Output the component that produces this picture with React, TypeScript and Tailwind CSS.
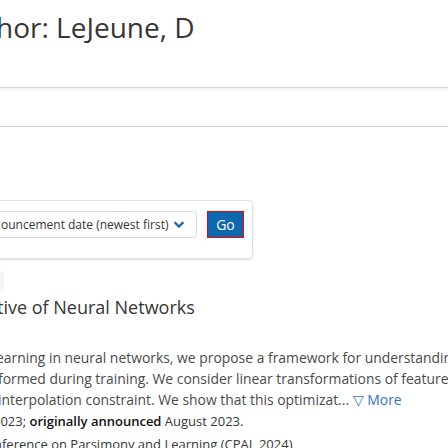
import React from "react";

const Chevron = () => (
  <svg width="10" height="8" viewBox="0 0 10 8" className="shrink-0">
    <path d="M1.5 2 L5 5.5 L8.5 2" fill="none" stroke="#2a6aa6" strokeWidth="2.4" strokeLinecap="square" />
  </svg>
);

export default function App() {
  return (
    <div className="w-[448px] h-[448px] overflow-hidden bg-white font-['Open_Sans',sans-serif] text-[#363636]">
      <h1 className="mt-[7px] -ml-[4px] whitespace-nowrap text-[28px] leading-[40px] font-normal text-[#363636]">
        hor: LeJeune, D
      </h1>

      <div className="mt-[40px] h-[4px] border-t border-[#d6d6d6] bg-gradient-to-b from-[#f0f0f0] to-white" />
      <div className="mt-[35px] border-t border-[#cfcfcf]" />

      <div className="mt-[73px] -ml-[20px] w-[273px] h-[59px] rounded-[4px] border border-[#e3e3e3] shadow-[0_1px_2px_rgba(0,0,0,0.12)] flex items-start gap-[10px] pt-[10px]">
        <div className="w-[216px] h-[27px] rounded-[4px] border border-[#dbdbdb] flex items-center pl-[19px] pr-[12px]">
          <span className="whitespace-nowrap text-[12px] text-[#363636]">ouncement date (newest first)</span>
          <span className="ml-auto flex"><Chevron /></span>
        </div>
        <button className="w-[37px] h-[27px] bg-[#0e68b0] border border-[#ff0000] text-white text-[14px] flex items-center justify-center">
          Go
        </button>
      </div>

      <div className="mt-[12px] -ml-[20px] w-[24px] h-[20px] rounded-[4px] bg-[#f5f5f5]" />

      <div className="mt-[2px] -ml-[3px] whitespace-nowrap text-[18px] leading-[28px] text-[#363636]">
        tive of Neural Networks
      </div>

      <div className="mt-[26px] text-[13.9px] leading-[21px] text-[#4a4a4a] whitespace-nowrap">
        <div className="-ml-[4px]">earning in neural networks, we propose a framework for understanding</div>
        <div className="-ml-[2px]">formed during training. We consider linear transformations of features</div>
        <div className="-ml-[2px]">
          interpolation constraint. We show that this optimizat...{" "}
          <span className="text-[#3273c4]">▽ More</span>
        </div>
        <div className="-ml-[7px] mt-[1px] text-[13px] text-[#363636]">
          2023; <span className="font-semibold text-[#111]">originally announced</span> August 2023.
        </div>
        <div className="-ml-[6px] mt-[2px] text-[13px] text-[#363636]">nference on Parsimony and Learning (CPAL 2024)</div>
      </div>
    </div>
  );
}
